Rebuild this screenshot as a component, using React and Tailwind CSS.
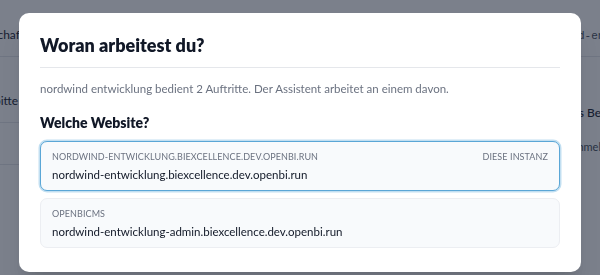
import { useState } from "react";

const sites = [
  {
    label: "nordwind-entwicklung.biexcellence.dev.openbi.run",
    host: "nordwind-entwicklung.biexcellence.dev.openbi.run",
    current: true,
  },
  {
    label: "openbicms",
    host: "nordwind-entwicklung-admin.biexcellence.dev.openbi.run",
    current: false,
  },
];

function Background() {
  return (
    <div className="flex h-[275px] w-[600px] overflow-hidden bg-white text-[12px] text-[#1f2937]">
      <div className="w-[300px] shrink-0">
        <div className="flex h-[57px] items-end border-b border-[#e5e7eb] pb-[12px]">
          <span className="-ml-[40px]">Gesellschaft</span>
        </div>
        <div className="flex h-[66px] items-center border-b border-[#e5e7eb] pt-[22px]">
          <span className="-ml-[24px]">Ambitte</span>
        </div>
        <div className="h-[42px] border-b border-[#e5e7eb]"></div>
      </div>
      <div className="ml-[278px] w-[200px] shrink-0">
        <div className="flex h-[57px] items-end border-b border-[#e5e7eb] pb-[12px] font-['Liberation_Mono',monospace] text-[11px] text-[#4b5563]">
          <span>d-entwicklung</span>
        </div>
        <div className="pt-[47px] font-medium">
          <span className="-ml-[8px]">als Bearbeiter</span>
        </div>
        <div className="pt-[17px] text-[11px] text-[#4b5563]">
          <span className="-ml-[8px]">Anmelden</span>
        </div>
      </div>
    </div>
  );
}

export default function App() {
  const [selected, setSelected] = useState(0);

  return (
    <div className="relative h-[275px] w-[600px] overflow-hidden font-['Lato','Liberation_Sans',sans-serif]">
      <Background />

      <div className="fixed inset-0 flex justify-center bg-slate-900/55 pt-[13px]">
        <div className="h-[259px] w-[562px] rounded-[10px] bg-white px-[21px] pt-[18px] shadow-xl">
          <div className="border-b border-[#e5e7eb] pb-[8px]">
            <h2 className="text-[18px] font-extrabold leading-[28px] text-[#111827]">
              Woran arbeitest du?
            </h2>
          </div>

          <p className="mt-[11px] text-[11.5px] leading-[20px] text-[#6b7280]">
            nordwind entwicklung bedient 2 Auftritte. Der Assistent arbeitet an einem davon.
          </p>

          <h3 className="mt-[14px] text-[14px] font-extrabold leading-[20px] text-[#111827]">
            Welche Website?
          </h3>

          <div className="mt-[8px] flex flex-col gap-[7px]">
            {sites.map((s, i) => (
              <button
                key={s.host}
                onClick={() => setSelected(i)}
                className={`flex w-full flex-col rounded-[7px] border bg-[#f8fafc] px-[11px] pb-[6px] pt-[8px] text-left ${
                  selected === i
                    ? "border-[#5aa6d6] shadow-[0_0_0_1.5px_rgba(120,185,225,0.45)]"
                    : "border-[#eceef2]"
                }`}
              >
                <div className="flex items-center justify-between text-[9px] uppercase leading-[14px] tracking-[0.01em] text-[#6b7280]">
                  <span>{s.label}</span>
                  {s.current && <span>Diese Instanz</span>}
                </div>
                <div className="mt-[2px] text-[11.5px] leading-[18px] text-[#111827]">
                  {s.host}
                </div>
              </button>
            ))}
          </div>
        </div>
      </div>
    </div>
  );
}
